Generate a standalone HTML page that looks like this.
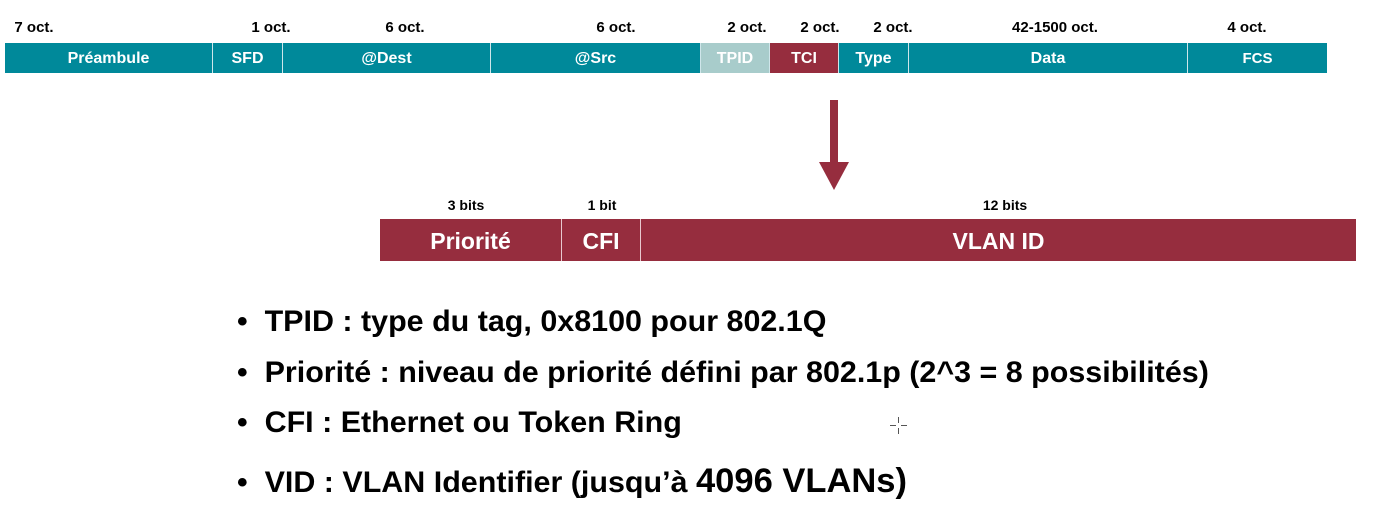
<!DOCTYPE html>
<html><head><meta charset="utf-8"><style>
body{margin:0;width:1386px;height:529px;background:#fff;position:relative;overflow:hidden;font-family:"Liberation Sans",Arial,sans-serif;font-weight:bold;}
.a{position:absolute;white-space:nowrap}
.lbl{position:absolute;font-size:15px;color:#000;transform:translateX(-50%);top:19px}
.c{position:absolute;top:43px;height:30px;background:#00899a;color:#fff;font-size:16px;line-height:32px;text-align:center;box-sizing:border-box;border-right:1px solid #cfe6ea}
.r{position:absolute;top:219px;height:42px;background:#962d3e;color:#fff;font-size:23px;line-height:44px;text-align:center;box-sizing:border-box;border-right:1px solid #e8c9cf}
.b{position:absolute;left:237px;font-size:30px;color:#000;white-space:nowrap;transform-origin:0 0;transform:scaleX(1.015)}
.bl{position:absolute;font-size:14px;top:197px;transform:translateX(-50%)}
</style></head><body>
<div class="lbl" style="left:34px">7 oct.</div>
<div class="lbl" style="left:271px">1 oct.</div>
<div class="lbl" style="left:405px">6 oct.</div>
<div class="lbl" style="left:616px">6 oct.</div>
<div class="lbl" style="left:747px">2 oct.</div>
<div class="lbl" style="left:820px">2 oct.</div>
<div class="lbl" style="left:893px">2 oct.</div>
<div class="lbl" style="left:1055px">42-1500 oct.</div>
<div class="lbl" style="left:1247px">4 oct.</div>
<div class="c" style="left:5px;width:208px">Préambule</div>
<div class="c" style="left:213px;width:70px">SFD</div>
<div class="c" style="left:283px;width:208px">@Dest</div>
<div class="c" style="left:491px;width:210px">@Src</div>
<div class="c" style="left:701px;width:69px;background:#a8cccb">TPID</div>
<div class="c" style="left:770px;width:69px;background:#962d3e">TCI</div>
<div class="c" style="left:839px;width:70px">Type</div>
<div class="c" style="left:909px;width:279px">Data</div>
<div class="c" style="left:1188px;width:139px;border-right:none;font-size:15px">FCS</div>
<svg class="a" style="left:815px;top:98px" width="40" height="95"><rect x="15" y="2" width="8" height="64" fill="#962d3e"/><polygon points="4,64 34,64 19,92" fill="#962d3e"/></svg>
<div class="bl" style="left:466px">3 bits</div>
<div class="bl" style="left:602px">1 bit</div>
<div class="bl" style="left:1005px">12 bits</div>
<div class="r" style="left:380px;width:182px">Priorité</div>
<div class="r" style="left:562px;width:79px">CFI</div>
<div class="r" style="left:641px;width:715px;border-right:none">VLAN ID</div>
<div class="b" style="top:305px">•&nbsp; TPID : type du tag, 0x8100 pour 802.1Q</div>
<div class="b" style="top:356px">•&nbsp; Priorité : niveau de priorité défini par 802.1p (2^3 = 8 possibilités)</div>
<div class="b" style="top:406px">•&nbsp; CFI : Ethernet ou Token Ring</div>
<div class="b" style="top:462px">•&nbsp; VID : VLAN Identifier (jusqu’à <span style="font-size:34px">4096 VLANs)</span></div>
<svg class="a" style="left:890px;top:417px" width="17" height="17"><path d="M8.5 0v6M8.5 11v6M0 8.5h6M11 8.5h6" stroke="#555" stroke-width="1"/></svg>
</body></html>
